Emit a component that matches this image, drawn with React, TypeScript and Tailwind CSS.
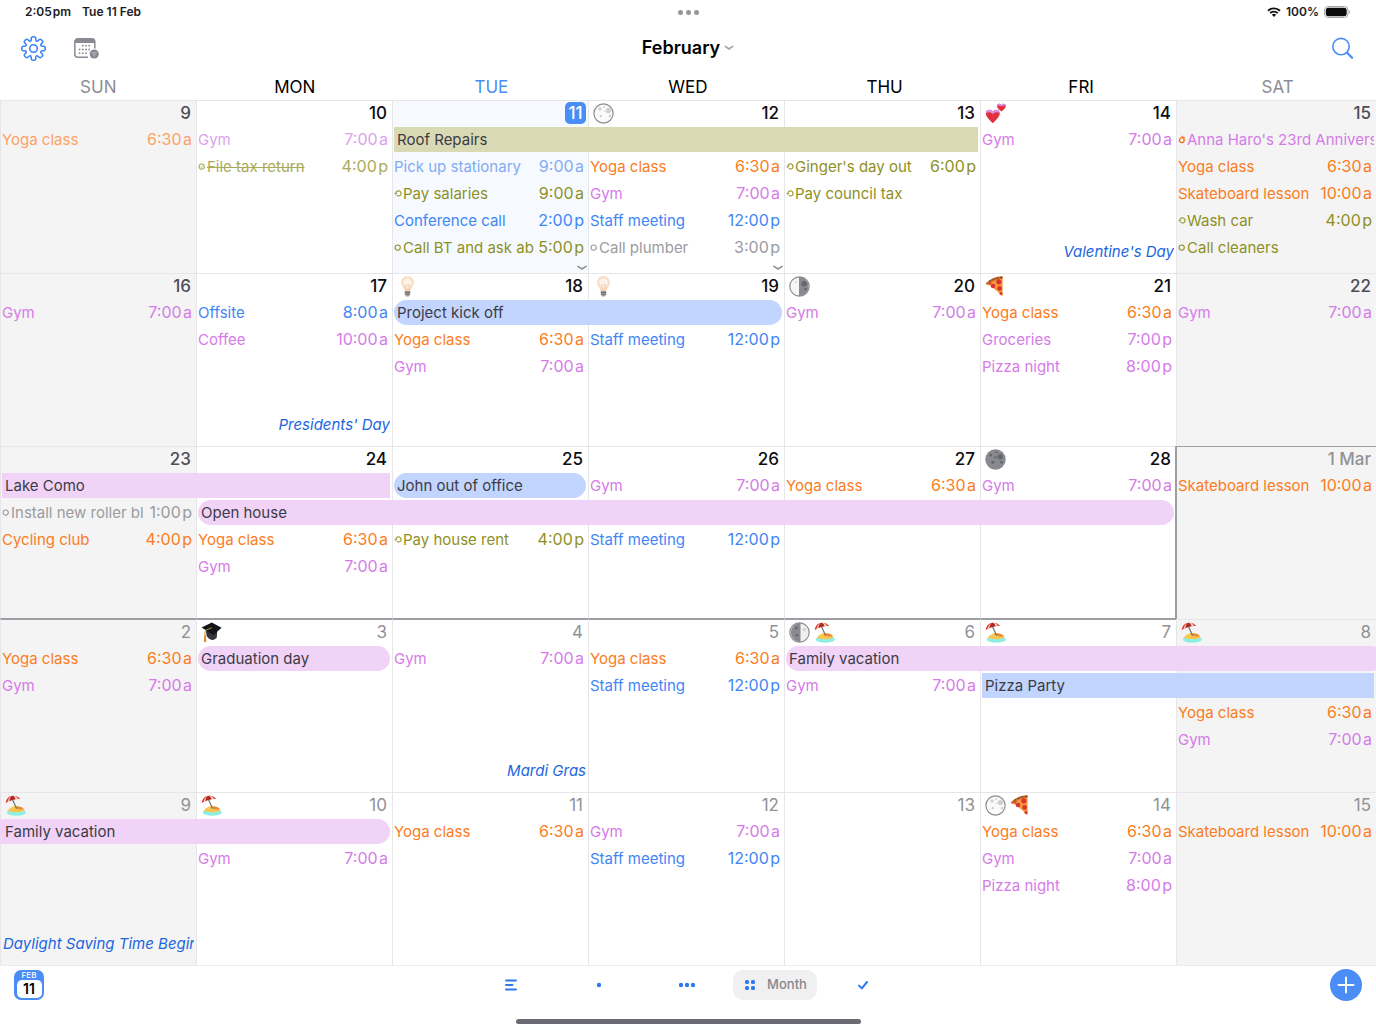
import type { ReactNode } from "react";
import clsx from "clsx";

type Tone =
  | "orange"
  | "orangePast"
  | "purple"
  | "purplePast"
  | "blue"
  | "bluePast"
  | "olive"
  | "olivePast"
  | "gray";
type BarTone = "olive" | "blue" | "pink";
type Mark = "todo" | "done" | "repeat" | "birthday";
type IconName =
  | "fullMoon"
  | "lastQuarter"
  | "newMoon"
  | "firstQuarter"
  | "hearts"
  | "bulb"
  | "pizza"
  | "cap"
  | "beach";

interface Day {
  date: string;
  icons?: IconName[];
  holiday?: string;
  more?: boolean;
  today?: boolean;
  outside?: boolean;
  edge?: "top" | "corner";
}

interface CalendarEvent {
  day: number;
  row: number;
  title: string;
  time?: string;
  tone: Tone;
  mark?: Mark;
}

interface Bar {
  day: number;
  row: number;
  span: number;
  title: string;
  tone: BarTone;
  shape: "square" | "pill" | "bleedLeft" | "bleedRight";
}

interface Week {
  days: Day[];
  bars: Bar[];
  events: CalendarEvent[];
}

const WEEKDAYS = ["SUN", "MON", "TUE", "WED", "THU", "FRI", "SAT"];

const COL = [
  "col-start-1",
  "col-start-2",
  "col-start-3",
  "col-start-4",
  "col-start-5",
  "col-start-6",
  "col-start-7",
];
const COL_END = [
  "col-end-2",
  "col-end-3",
  "col-end-4",
  "col-end-5",
  "col-end-6",
  "col-end-7",
  "col-end-8",
];
// index 0 is the first line under the date
const ROW = [
  "row-start-2",
  "row-start-3",
  "row-start-4",
  "row-start-5",
  "row-start-6",
];

const TONES: Record<Tone, string> = {
  orange: "text-[#fb7c22]",
  orangePast: "text-[#fca266]",
  purple: "text-[#d57be8]",
  purplePast: "text-[#de9fee]",
  blue: "text-[#3f86f4]",
  bluePast: "text-[#82abf3]",
  olive: "text-[#8e9025]",
  olivePast: "text-[#a9ab58]",
  gray: "text-[#9b9ba1]",
};

const BAR_TONES: Record<BarTone, string> = {
  olive: "bg-[#d9dab3]",
  blue: "bg-[#c1d5fe]",
  pink: "bg-[#f0d3f7]",
};

const BAR_SHAPES: Record<Bar["shape"], string> = {
  square: "mx-0.5 px-[3px]",
  pill: "mx-0.5 px-[3px] rounded-full",
  bleedLeft: "-ml-2 mr-0.5 pl-[13px] rounded-full",
  bleedRight: "ml-0.5 -mr-2 px-[3px] rounded-full",
};

const ev = (
  day: number,
  row: number,
  title: string,
  time: string | undefined,
  tone: Tone,
  mark?: Mark
): CalendarEvent => ({ day, row, title, time, tone, mark });

const WEEKS: Week[] = [
  {
    days: [
      { date: "9" },
      { date: "10" },
      { date: "11", today: true, more: true },
      { date: "12", icons: ["fullMoon"], more: true },
      { date: "13" },
      { date: "14", icons: ["hearts"], holiday: "Valentine's Day" },
      { date: "15" },
    ],
    bars: [
      { day: 2, row: 0, span: 3, title: "Roof Repairs", tone: "olive", shape: "square" },
    ],
    events: [
      ev(0, 0, "Yoga class", "6:30 a", "orangePast"),
      ev(1, 0, "Gym", "7:00 a", "purplePast"),
      ev(1, 1, "File tax return", "4:00 p", "olivePast", "done"),
      ev(2, 1, "Pick up stationary", "9:00 a", "bluePast"),
      ev(2, 2, "Pay salaries", "9:00 a", "olive", "repeat"),
      ev(2, 3, "Conference call", "2:00 p", "blue"),
      ev(2, 4, "Call BT and ask ab", "5:00 p", "olive", "todo"),
      ev(3, 1, "Yoga class", "6:30 a", "orange"),
      ev(3, 2, "Gym", "7:00 a", "purple"),
      ev(3, 3, "Staff meeting", "12:00 p", "blue"),
      ev(3, 4, "Call plumber", "3:00 p", "gray", "todo"),
      ev(4, 1, "Ginger's day out", "6:00 p", "olive", "repeat"),
      ev(4, 2, "Pay council tax", undefined, "olive", "repeat"),
      ev(5, 0, "Gym", "7:00 a", "purple"),
      ev(6, 0, "Anna Haro's 23rd Annivers", undefined, "purple", "birthday"),
      ev(6, 1, "Yoga class", "6:30 a", "orange"),
      ev(6, 2, "Skateboard lesson", "10:00 a", "orange"),
      ev(6, 3, "Wash car", "4:00 p", "olive", "repeat"),
      ev(6, 4, "Call cleaners", undefined, "olive", "todo"),
    ],
  },
  {
    days: [
      { date: "16" },
      { date: "17", holiday: "Presidents' Day" },
      { date: "18", icons: ["bulb"] },
      { date: "19", icons: ["bulb"] },
      { date: "20", icons: ["lastQuarter"] },
      { date: "21", icons: ["pizza"] },
      { date: "22" },
    ],
    bars: [
      { day: 2, row: 0, span: 2, title: "Project kick off", tone: "blue", shape: "pill" },
    ],
    events: [
      ev(0, 0, "Gym", "7:00 a", "purple"),
      ev(1, 0, "Offsite", "8:00 a", "blue"),
      ev(1, 1, "Coffee", "10:00 a", "purple"),
      ev(2, 1, "Yoga class", "6:30 a", "orange"),
      ev(2, 2, "Gym", "7:00 a", "purple"),
      ev(3, 1, "Staff meeting", "12:00 p", "blue"),
      ev(4, 0, "Gym", "7:00 a", "purple"),
      ev(5, 0, "Yoga class", "6:30 a", "orange"),
      ev(5, 1, "Groceries", "7:00 p", "purple"),
      ev(5, 2, "Pizza night", "8:00 p", "purple"),
      ev(6, 0, "Gym", "7:00 a", "purple"),
    ],
  },
  {
    days: [
      { date: "23" },
      { date: "24" },
      { date: "25" },
      { date: "26" },
      { date: "27" },
      { date: "28", icons: ["newMoon"] },
      { date: "1 Mar", outside: true, edge: "corner" },
    ],
    bars: [
      { day: 0, row: 0, span: 2, title: "Lake Como", tone: "pink", shape: "square" },
      { day: 2, row: 0, span: 1, title: "John out of office", tone: "blue", shape: "pill" },
      { day: 1, row: 1, span: 5, title: "Open house", tone: "pink", shape: "pill" },
    ],
    events: [
      ev(0, 1, "Install new roller bl", "1:00 p", "gray", "todo"),
      ev(0, 2, "Cycling club", "4:00 p", "orange"),
      ev(1, 2, "Yoga class", "6:30 a", "orange"),
      ev(1, 3, "Gym", "7:00 a", "purple"),
      ev(2, 2, "Pay house rent", "4:00 p", "olive", "repeat"),
      ev(3, 0, "Gym", "7:00 a", "purple"),
      ev(3, 2, "Staff meeting", "12:00 p", "blue"),
      ev(4, 0, "Yoga class", "6:30 a", "orange"),
      ev(5, 0, "Gym", "7:00 a", "purple"),
      ev(6, 0, "Skateboard lesson", "10:00 a", "orange"),
    ],
  },
  {
    days: [
      { date: "2", outside: true, edge: "top" },
      { date: "3", outside: true, edge: "top", icons: ["cap"] },
      { date: "4", outside: true, edge: "top", holiday: "Mardi Gras" },
      { date: "5", outside: true, edge: "top" },
      { date: "6", outside: true, edge: "top", icons: ["firstQuarter", "beach"] },
      { date: "7", outside: true, edge: "top", icons: ["beach"] },
      { date: "8", outside: true, icons: ["beach"] },
    ],
    bars: [
      { day: 1, row: 0, span: 1, title: "Graduation day", tone: "pink", shape: "pill" },
      { day: 4, row: 0, span: 3, title: "Family vacation", tone: "pink", shape: "bleedRight" },
      { day: 5, row: 1, span: 2, title: "Pizza Party", tone: "blue", shape: "square" },
    ],
    events: [
      ev(0, 0, "Yoga class", "6:30 a", "orange"),
      ev(0, 1, "Gym", "7:00 a", "purple"),
      ev(2, 0, "Gym", "7:00 a", "purple"),
      ev(3, 0, "Yoga class", "6:30 a", "orange"),
      ev(3, 1, "Staff meeting", "12:00 p", "blue"),
      ev(4, 1, "Gym", "7:00 a", "purple"),
      ev(6, 2, "Yoga class", "6:30 a", "orange"),
      ev(6, 3, "Gym", "7:00 a", "purple"),
    ],
  },
  {
    days: [
      { date: "9", outside: true, icons: ["beach"], holiday: "Daylight Saving Time Begin" },
      { date: "10", outside: true, icons: ["beach"] },
      { date: "11", outside: true },
      { date: "12", outside: true },
      { date: "13", outside: true },
      { date: "14", outside: true, icons: ["fullMoon", "pizza"] },
      { date: "15", outside: true },
    ],
    bars: [
      { day: 0, row: 0, span: 2, title: "Family vacation", tone: "pink", shape: "bleedLeft" },
    ],
    events: [
      ev(1, 1, "Gym", "7:00 a", "purple"),
      ev(2, 0, "Yoga class", "6:30 a", "orange"),
      ev(3, 0, "Gym", "7:00 a", "purple"),
      ev(3, 1, "Staff meeting", "12:00 p", "blue"),
      ev(5, 0, "Yoga class", "6:30 a", "orange"),
      ev(5, 1, "Gym", "7:00 a", "purple"),
      ev(5, 2, "Pizza night", "8:00 p", "purple"),
      ev(6, 0, "Skateboard lesson", "10:00 a", "orange"),
    ],
  },
];

export default function App() {
  return (
    <div className="flex min-h-screen flex-col overflow-hidden bg-white font-[Inter,'Liberation_Sans',sans-serif] text-black">
      <StatusBar />
      <Toolbar />
      <div className="grid h-7 grid-cols-7 items-center pt-0.5 text-center text-[17px] leading-6">
        {WEEKDAYS.map((name, i) => (
          <span
            key={name}
            className={clsx(
              (i === 0 || i === 6) && "text-[#8d8d93]",
              i === 2 && "text-[#4a8df6]"
            )}
          >
            {name}
          </span>
        ))}
      </div>
      <main className="flex flex-1 flex-col">
        {WEEKS.map((week, i) => (
          <WeekRow key={i} week={week} />
        ))}
      </main>
      <BottomBar />
    </div>
  );
}

function StatusBar() {
  return (
    <div className="grid h-6 grid-cols-3 items-center px-[25px] text-[12px] font-semibold text-[#1c1c1f]">
      <div className="flex gap-[11px]">
        <span>2:05{"\u200a"}pm</span>
        <span>Tue 11 Feb</span>
      </div>
      <div className="flex justify-center gap-[3px]">
        <span className="size-[5px] rounded-full bg-[#97979b]" />
        <span className="size-[5px] rounded-full bg-[#97979b]" />
        <span className="size-[5px] rounded-full bg-[#97979b]" />
      </div>
      <div className="flex items-center justify-end gap-[5px]">
        <svg viewBox="0 0 14 10" className="h-[10px] w-[14px]" fill="none" stroke="#111" strokeWidth="1.9">
          <path d="M1 3.8a8.6 8.6 0 0 1 12 0" />
          <path d="M3.2 6.2a5.4 5.4 0 0 1 7.6 0" />
          <path d="M7 9.9 4.9 7.8a3 3 0 0 1 4.2 0z" fill="#111" stroke="none" />
        </svg>
        <span>100%</span>
        <svg viewBox="0 0 27 12" className="h-3 w-[27px]">
          <rect x="0.5" y="0.5" width="23.5" height="11" rx="3.6" fill="none" stroke="#a9a9ad" />
          <rect x="1.8" y="1.8" width="20.900" height="8.400" rx="2.600" fill="#0b0b0c" />
          <path d="M25.2 4.2c1.5.5 1.5 3.1 0 3.6z" fill="#a9a9ad" />
        </svg>
      </div>
    </div>
  );
}

function Toolbar() {
  return (
    <header className="grid h-12 grid-cols-3 items-center px-[21px]">
      <div className="flex items-center gap-7">
        <button type="button" aria-label="Settings" className="text-[#3f86f4]">
          <GearIcon />
        </button>
        <button type="button" aria-label="Calendar sets">
          <CalendarFilterIcon />
        </button>
      </div>
      <button type="button" className="flex items-center justify-center gap-1 text-[18px] leading-6 font-semibold">
        February
        <svg viewBox="0 0 10 6" className="h-[6px] w-[10px]" fill="none" stroke="#a5a5aa" strokeWidth="1.7" strokeLinecap="round">
          <path d="M1.4 1.5 5 3.9l3.6-2.4" />
        </svg>
      </button>
      <button type="button" aria-label="Search" className="justify-self-end">
        <svg viewBox="0 0 24 24" className="size-6" fill="none" stroke="#4a8df6" strokeLinecap="round">
          <circle cx="10" cy="10.6" r="8.2" strokeWidth="1.6" />
          <path d="m16.100 16.800 5 5" strokeWidth="2.2" />
        </svg>
      </button>
    </header>
  );
}

function WeekRow({ week }: { week: Week }) {
  return (
    <section className="grid flex-1 grid-cols-[repeat(6,minmax(0,196fr))_minmax(0,200fr)] grid-rows-[repeat(6,27px)_minmax(11px,1fr)]">
      {week.days.map((day, i) => (
        <DayCell key={i} day={day} index={i} />
      ))}
      {week.bars.map((bar) => (
        <div
          key={bar.title}
          className={clsx(
            "h-[25px] overflow-hidden text-[15px] leading-[25px] whitespace-nowrap text-[#3d3b46]",
            COL[bar.day],
            COL_END[bar.day + bar.span - 1],
            ROW[bar.row],
            BAR_TONES[bar.tone],
            BAR_SHAPES[bar.shape]
          )}
        >
          {bar.title}
        </div>
      ))}
      {week.events.map((event, i) => (
        <EventLine key={i} event={event} />
      ))}
    </section>
  );
}

function DayCell({ day, index }: { day: Day; index: number }) {
  const weekend = index === 0 || index === 6;
  return (
    <div
      className={clsx(
        "row-span-full row-start-1 flex min-w-0 flex-col border-t border-l border-[#e6e6e8]",
        COL[index],
        COL_END[index],
        day.today ? "bg-[#f6faff]" : weekend ? "bg-[#f4f4f4]" : "bg-white",
        day.edge === "top" && "-mt-px border-t-2 border-t-[#9d9da4]",
        day.edge === "corner" && "border-t-[#9d9da4] -ml-px border-l-2 border-l-[#9d9da4]"
      )}
    >
      <div className="flex h-6 items-center justify-between pr-[5px] pl-1">
        <div className="flex gap-1">
          {day.icons?.map((name) => (
            <DayIcon key={name} name={name} />
          ))}
        </div>
        {day.today ? (
          <span className="-mr-[3px] h-[22px] w-[21px] rounded-[5px] bg-[#4a8df6] text-center text-[17px] leading-[22px] font-medium text-white">
            {day.date}
          </span>
        ) : (
          <span
            className={clsx(
              "text-[17px] leading-6",
              day.date.includes("Mar") && "font-medium",
              day.outside
                ? "text-[#919197]"
                : clsx("font-medium", weekend ? "text-[#4d4d57]" : "text-[#0d0d10]")
            )}
          >
            {day.date}
          </span>
        )}
      </div>
      <div className="flex flex-1 flex-col justify-end overflow-hidden">
        {day.holiday && (
          <div
            className={clsx(
              "mr-0.5 flex h-[33px] overflow-hidden pl-0.5 text-[15px] leading-6 whitespace-nowrap text-[#1d66e0] italic",
              index > 0 && "justify-end"
            )}
          >
            {day.holiday}
          </div>
        )}
        {day.more && (
          <svg viewBox="0 0 10 6" className="mr-px mb-0.5 h-[6px] w-[10px] self-end" fill="none" stroke="#8f8f95" strokeWidth="1.6" strokeLinecap="round">
            <path d="M1 1.4 5 4l4-2.6" />
          </svg>
        )}
      </div>
    </div>
  );
}

function EventLine({ event }: { event: CalendarEvent }) {
  return (
    <div
      className={clsx(
        "flex h-[25px] min-w-0 items-center gap-1 pl-0.5 leading-[25px] whitespace-nowrap",
        event.time ? "pr-1" : "pr-0.5",
        COL[event.day],
        COL_END[event.day],
        ROW[event.row],
        TONES[event.tone]
      )}
    >
      <span className="flex min-w-0 flex-1 items-center overflow-hidden text-[15px]">
        {event.mark && <MarkIcon mark={event.mark} />}
        <span className={clsx(event.mark === "done" && "line-through decoration-1")}>
          {event.title}
        </span>
      </span>
      {event.time && (
        <span className="text-[16px]">{event.time.replace(" ", "\u200a")}</span>
      )}
    </div>
  );
}

function MarkIcon({ mark }: { mark: Mark }) {
  return (
    <svg viewBox="0 0 9 9" className="size-[9px] shrink-0" fill="none" stroke="currentColor" strokeWidth="1.1">
      {mark === "repeat" && (
        <>
          <path d="M1.9 4.2a2.6 2.6 0 1 1 .9 2.2" />
          <path d="M.2 4.2h3.2L1.8 5.9z" fill="currentColor" stroke="none" />
        </>
      )}
      {mark === "todo" && <circle cx="3.7" cy="4.6" r="2.6" />}
      {mark === "done" && (
        <>
          <circle cx="3.7" cy="4.6" r="2.6" />
          <path d="m2.6 4.7.8.9 1.5-1.9" strokeWidth="0.8" />
        </>
      )}
      {mark === "birthday" && (
        <g stroke="#f4711f" strokeWidth="1.4">
          <path d="M5.3 3.4A2.4 2.4 0 1 1 3 3" />
          <path d="M4 .8v3M3.6 1.6l3.2 1.5" strokeWidth="1.2" />
        </g>
      )}
    </svg>
  );
}

const ICONS: Record<IconName, ReactNode> = {
  fullMoon: (
    <>
      <circle cx="10.5" cy="10.5" r="9.6" fill="#fbfbfb" stroke="#8e8e94" strokeWidth="1.2" />
      <g fill="#cfcfd1">
        <circle cx="15.3" cy="7.6" r="2.6" />
        <circle cx="7" cy="6" r="1.7" />
        <circle cx="11.2" cy="4" r="1" />
        <circle cx="7.8" cy="13" r="1.2" />
        <circle cx="17" cy="13" r="1.3" />
        <circle cx="11.3" cy="8.5" r=".7" />
      </g>
    </>
  ),
  newMoon: (
    <>
      <circle cx="10.5" cy="10.5" r="10.2" fill="#898990" />
      <g fill="#66666d">
        <circle cx="15.2" cy="7.8" r="2.7" />
        <circle cx="5.6" cy="6" r="1.5" />
        <circle cx="10.6" cy="8.3" r="1.1" />
        <circle cx="7.8" cy="13.2" r="1.5" />
        <circle cx="16.6" cy="13.3" r="1.4" />
        <circle cx="11.5" cy="3.2" r="1" />
      </g>
    </>
  ),
  lastQuarter: (
    <>
      <circle cx="10.5" cy="10.5" r="9.7" fill="#f6f6f6" stroke="#8e8e94" strokeWidth="1.2" />
      <path d="M10 .8a9.7 9.7 0 0 1 0 19.4z" fill="#898990" />
      <circle cx="15.2" cy="7.8" r="2.7" fill="#66666d" />
      <circle cx="16.6" cy="13.3" r="1.3" fill="#66666d" />
      <circle cx="7" cy="6" r="1.2" fill="#dedee0" />
    </>
  ),
  firstQuarter: (
    <>
      <circle cx="10.5" cy="10.5" r="9.7" fill="#f0f0f0" stroke="#8e8e94" strokeWidth="1.2" />
      <path d="M11.5.8a9.7 9.7 0 0 0 0 19.4z" fill="#898990" />
      <circle cx="7.2" cy="6" r="1.4" fill="#66666d" />
      <circle cx="8" cy="13.2" r="1.3" fill="#66666d" />
      <circle cx="15.5" cy="7.6" r="1.8" fill="#d5d5d7" />
    </>
  ),
  hearts: (
    <>
      <path d="M7.8 20.2C4.4 17 .8 13.6.8 10.3c0-2 1.4-3.6 3.4-3.6 1.6 0 2.8.8 3.6 2.4.8-1.6 2-2.4 3.6-2.4 2 0 3.4 1.6 3.4 3.6 0 3.3-3.6 6.7-7 9.900z" fill="#e0313f" />
      <path d="M.8 10.6C1 8 2.4 6.7 4.2 6.7c1.6 0 2.8.8 3.6 2.4.8-1.6 2-2.4 3.6-2.4 1.8 0 3.2 1.3 3.4 3.9-2-1.8-4.6-1.9-7 .4-2.4-2.3-5-2.2-7-.4z" fill="#dd8ee6" />
      <path d="M16.4 8.5C14.3 6.7 12 4.9 12 2.9c0-1.2.9-2.1 2.1-2.1 1 0 1.8.5 2.3 1.4.5-.9 1.3-1.4 2.3-1.4 1.2 0 2.1.9 2.1 2.1 0 2-2.3 3.8-4.4 5.600z" fill="#e0313f" />
      <path d="M12 3.3C12.1 1.7 13 .8 14.1.8c1 0 1.8.5 2.3 1.4.5-.9 1.3-1.4 2.3-1.4 1.1 0 2 .9 2.1 2.5-1.4-1-2.8-1-4.4.3-1.6-1.3-3-1.3-4.4-.3z" fill="#dd8ee6" />
    </>
  ),
  bulb: (
    <>
      <path d="M10.500.3c3.700 0 6.300 2.700 6.300 6.100 0 3.500-2.700 4.800-3.100 8.400H7.300c-.4-3.600-3.100-4.900-3.100-8.400C4.200 3 6.800.3 10.500.3z" fill="#fbdcc2" />
      <path d="M10.500 2.200c2.600 0 4.400 2 4.400 4.300 0 2-1.600 3.600-2.600 5H8.700c-1-1.400-2.600-3-2.600-5 0-2.300 1.800-4.300 4.400-4.300z" fill="#fef1e7" />
      <path d="M9.300 14.500 8.600 8.800h3.800l-.7 5.700" fill="none" stroke="#f3c7a2" strokeWidth=".8" />
      <path d="M7.800 14.800h5.400v3.400l-1.300 2.300H9.100l-1.300-2.300z" fill="#a5a29d" />
      <path d="M7.800 16.400h5.400M8 18.200h5" stroke="#65635f" strokeWidth=".9" />
    </>
  ),
  pizza: (
    <>
      <path d="M.8 7.400C4.800 3.600 11 .8 17.600.6v19.800C12.800 15 7 10.600.8 7.400z" fill="#f79a35" />
      <path d="M.6 7.800C4.800 3.200 10.800.3 17.600.3v2.500C12 3 6.500 5.200 2.600 9z" fill="#c9682a" />
      <path d="M4 5.400C8 2.800 12 1.700 17 1.500" fill="none" stroke="#4a4a30" strokeWidth="1" strokeDasharray="2 2" />
      <g fill="#d9303a">
        <circle cx="13.8" cy="5.8" r="2.6" />
        <circle cx="8" cy="10" r="2.2" />
        <circle cx="14.6" cy="12.4" r="2.3" />
        <circle cx="16" cy="17.4" r="1.5" />
        <circle cx="5.3" cy="7.3" r="1.1" />
      </g>
    </>
  ),
  cap: (
    <>
      <path d="M4.8 8.5 11 6.5l5.2 3.2-.4 5.9c-1.6 1.9-3.6 2.8-5.4 2.2-2-.6-3.9-2.2-4.9-4.3z" fill="#34343c" />
      <path d="M.6 5.5 10.8.6l9.8 5.2-8.200 7.300z" fill="#141418" />
      <path d="m10.8 5.8-6 2.4c-.8.5-.8 2-1 4.600" fill="none" stroke="#c4a032" strokeWidth=".9" />
      <path d="m3.3 12.6 1.6.3.4 7.400-2.500-.6z" fill="#e98a2c" />
    </>
  ),
  beach: (
    <>
      <ellipse cx="11.3" cy="17.400" rx="9.600" ry="3.400" fill="#8deee4" />
      <path d="M2.8 15.6c2.4-3 5.2-4.500 8.600-4.500 3.600 0 6.400 1.500 8.200 4.100-2.400 2.200-12.600 3-16.800.4z" fill="#fbc650" />
      <path d="M9.500 12.600c3-2 7.400-1.200 9.300 1.300-2.600 1.500-6 .8-9.300-1.300z" fill="#ee8a35" />
      <path d="m7.200 4 4.400 9.600" stroke="#76706c" strokeWidth="1.2" />
      <path d="M.8 8C1 3.800 4 .7 8 .7c3.100 0 5.700 1.100 7.200 3.400-4.600-.5-9.600.9-14.400 3.900z" fill="#e2392f" />
      <path d="M4.300 6.100C4.500 3.600 5.800 1.600 8 .7c1 .9 2.200 2 2.700 3.400-2.200.3-4.300.9-6.400 2z" fill="#a32c26" />
      <path d="M2.600 7C2.900 4.500 4.500 2.200 6.300 1 5 2.500 4.400 4.300 4.300 6.100zM10.700 4.100C10.200 2.700 9.400 1.500 8.300.7c2.200.2 3.700 1.500 4.600 3.200z" fill="#fbd9c4" />
    </>
  ),
};

function DayIcon({ name }: { name: IconName }) {
  return (
    <svg viewBox="0 0 21 21" className="size-[21px]" aria-hidden="true">
      {ICONS[name]}
    </svg>
  );
}

// eight rounded teeth around the hub
const GEAR_POINTS = Array.from({ length: 8 }, (_, i) => {
  const mid = (i * Math.PI) / 4 - Math.PI / 2;
  return [
    [-0.26, 8],
    [-0.21, 12],
    [0.21, 12],
    [0.26, 8],
  ].map(([turn, radius]) => [
    12.5 + radius * Math.cos(mid + turn),
    12.5 + radius * Math.sin(mid + turn),
  ]);
}).flat();

const GEAR_PATH = [...GEAR_POINTS, GEAR_POINTS[0]]
  .map(([x, y], i) => {
    const [nx, ny] = GEAR_POINTS[(i + 1) % GEAR_POINTS.length];
    // the closing point shares its midpoint with the first one
    const [ex, ey] = i === GEAR_POINTS.length ? GEAR_POINTS[1] : [nx, ny];
    const mx = (x + ex) / 2;
    const my = (y + ey) / 2;
    return i === 0 ? `M${mx} ${my}` : `Q${x} ${y} ${mx} ${my}`;
  })
  .join("");

function GearIcon() {
  return (
    <svg viewBox="0 0 25 25" className="size-[25px]" fill="none" stroke="currentColor" strokeWidth="1.6" strokeLinejoin="round">
      <path d={GEAR_PATH} />
      <circle cx="12.5" cy="12.5" r="3.8" />
    </svg>
  );
}

function CalendarFilterIcon() {
  return (
    <svg viewBox="0 0 25 21" className="h-[21px] w-[25px]" fill="#8b8992">
      <path d="M14 19.2H3.8a3 3 0 0 1-3-3V3.800a3 3 0 0 1 3-3h14a3 3 0 0 1 3 3v6.700" fill="none" stroke="#8b8992" strokeWidth="1.5" />
      <path d="M.8 5V3.800a3 3 0 0 1 3-3h14a3 3 0 0 1 3 3V5z" />
      {[
        [8.8, 7.7],
        [12, 7.7],
        [15.2, 7.7],
        [5.6, 11.5],
        [8.8, 11.5],
        [12, 11.5],
        [15.2, 11.5],
        [5.6, 15.2],
        [8.8, 15.2],
        [12, 15.2],
      ].map(([cx, cy]) => (
        <circle key={`${cx}-${cy}`} cx={cx} cy={cy} r="0.9" />
      ))}
      <circle cx="20.2" cy="16" r="4.6" />
      <path d="M17.7 14.6h5M18.5 16.2h3.4M19.4 17.8h1.6" stroke="#bcbbc2" strokeWidth="0.8" />
    </svg>
  );
}

function BottomBar() {
  return (
    <footer className="flex h-[67px] flex-col justify-between border-t border-[#ececec] pb-2">
      <div className="flex items-center justify-between px-[14px] pt-[3px]">
        <button
          type="button"
          aria-label="Go to today"
          className="flex size-[30px] flex-col items-center rounded-[7px] bg-[#4a8df6] pb-0.5"
        >
          <span className="text-[8px] leading-[10px] font-medium text-white">FEB</span>
          <span className="flex w-[25px] flex-1 items-center justify-center rounded-[5px] bg-white text-[14px] leading-4 font-semibold">
            11
          </span>
        </button>
        <nav className="flex items-center">
          <TabButton label="List">
            <path d="M2 2.5h10M2 7h6.5M2 11.5h10" strokeWidth="2" />
          </TabButton>
          <TabButton label="Day">
            <circle cx="7" cy="7" r="2.2" fill="currentColor" stroke="none" />
          </TabButton>
          <TabButton label="Week">
            <g fill="currentColor" stroke="none">
              <circle cx="1" cy="7" r="2.2" />
              <circle cx="7" cy="7" r="2.2" />
              <circle cx="13" cy="7" r="2.2" />
            </g>
          </TabButton>
          <TabButton label="Month" active>
            <g fill="currentColor" stroke="none">
              <rect x="2" y="2" width="4" height="4" rx="1.5" />
              <rect x="8" y="2" width="4" height="4" rx="1.5" />
              <rect x="2" y="8" width="4" height="4" rx="1.5" />
              <rect x="8" y="8" width="4" height="4" rx="1.5" />
            </g>
          </TabButton>
          <TabButton label="Tasks">
            <path d="m3 7.6 2.8 2.8L11 4" strokeWidth="2" />
          </TabButton>
        </nav>
        <button
          type="button"
          aria-label="New event"
          className="flex size-8 items-center justify-center rounded-full bg-[#4a8df6]"
        >
          <svg viewBox="0 0 18 18" className="size-[18px]" stroke="#fff" strokeWidth="1.9" strokeLinecap="round">
            <path d="M9 1.5v15M1.5 9h15" />
          </svg>
        </button>
      </div>
      <div className="h-[5px] w-[345px] self-center rounded-full bg-[#6c6b74]" />
    </footer>
  );
}

function TabButton({
  label,
  active = false,
  children,
}: {
  label: string;
  active?: boolean;
  children: ReactNode;
}) {
  return (
    <button
      type="button"
      aria-label={label}
      aria-pressed={active}
      className={clsx(
        "mx-0.5 flex h-[30px] w-[84px] items-center justify-center gap-2.5 rounded-[10px]",
        active && "bg-[#f0f0f1]"
      )}
    >
      <svg viewBox="0 0 14 14" className="size-[14px] overflow-visible text-[#2f78f2]" fill="none" stroke="currentColor" strokeLinecap="round" strokeLinejoin="round">
        {children}
      </svg>
      {active && <span className="text-[13px] font-medium text-[#88888e]">{label}</span>}
    </button>
  );
}
